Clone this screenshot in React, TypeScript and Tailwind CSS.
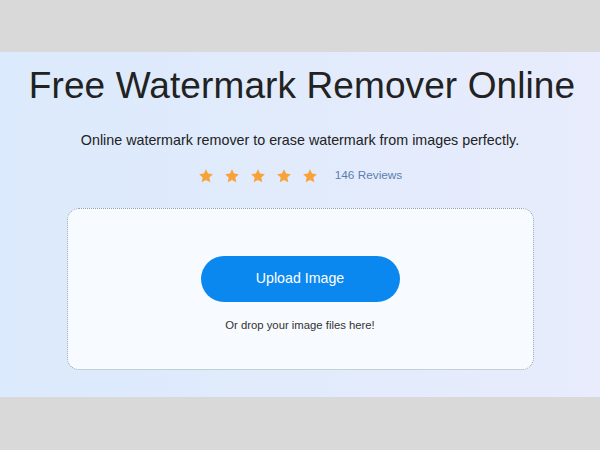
export default function App() {
  const stars = [0, 1, 2, 3, 4];
  return (
    <div className="flex h-[450px] w-[600px] flex-col bg-[#d9d9d9] font-['Liberation_Sans',Arial,sans-serif]">
      <div className="h-[52px] shrink-0" />
      <div className="flex h-[345px] shrink-0 flex-col items-center bg-gradient-to-r from-[#dbeafc] to-[#e8ecfc]">
        <h1 className="mt-[12px] pl-[4px] text-[37px] leading-[44px] tracking-[0.1px] text-[#222]">
          Free Watermark Remover Online
        </h1>
        <p className="mt-[23px] text-[14.3px] leading-[18px] text-[#222]">
          Online watermark remover to erase watermark from images perfectly.
        </p>
        <div className="mt-[18px] flex items-center">
          <div className="flex gap-[10px]">
            {stars.map((i) => (
              <svg key={i} width="16" height="16" viewBox="0 0 24 24">
                <path
                  d="M12 1.8l3.1 6.6 7.2.9-5.3 5 1.4 7.1L12 17.9l-6.4 3.5 1.4-7.1-5.3-5 7.2-.9z"
                  fill="#f7a33a"
                />
              </svg>
            ))}
          </div>
          <span className="ml-[17px] text-[11.8px] text-[#5a7fae]">146 Reviews</span>
        </div>
        <div className="mt-[23px] flex h-[162px] w-[467px] flex-col items-center rounded-[12px] border border-dotted border-[#8ea7aa] bg-[#f7fafe]">
          <button className="mt-[47px] h-[46px] w-[199px] rounded-full bg-[#0b88f0] text-[14.2px] text-white">
            Upload Image
          </button>
          <p className="mt-[15px] text-[11.3px] text-[#333]">Or drop your image files here!</p>
        </div>
      </div>
    </div>
  );
}
